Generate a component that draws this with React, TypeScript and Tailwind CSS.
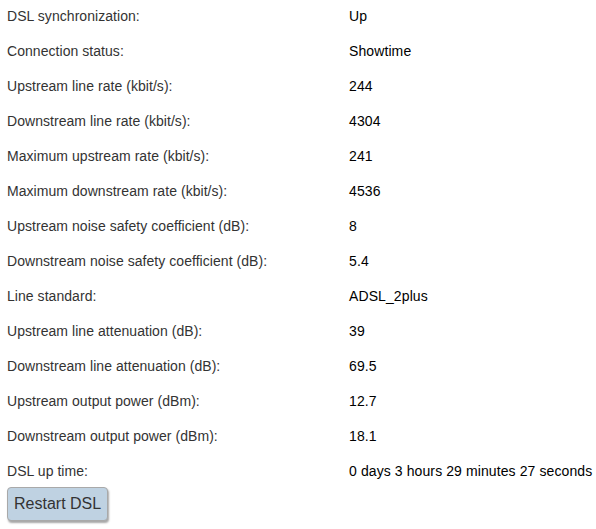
const rows: [string, string][] = [
  ["DSL synchronization:", "Up"],
  ["Connection status:", "Showtime"],
  ["Upstream line rate (kbit/s):", "244"],
  ["Downstream line rate (kbit/s):", "4304"],
  ["Maximum upstream rate (kbit/s):", "241"],
  ["Maximum downstream rate (kbit/s):", "4536"],
  ["Upstream noise safety coefficient (dB):", "8"],
  ["Downstream noise safety coefficient (dB):", "5.4"],
  ["Line standard:", "ADSL_2plus"],
  ["Upstream line attenuation (dB):", "39"],
  ["Downstream line attenuation (dB):", "69.5"],
  ["Upstream output power (dBm):", "12.7"],
  ["Downstream output power (dBm):", "18.1"],
  ["DSL up time:", "0 days 3 hours 29 minutes 27 seconds"],
];

export default function App() {
  return (
    <div className="w-[596px] h-[529px] bg-white font-['Liberation_Sans',Arial,sans-serif] text-[14px] overflow-hidden">
      <div className="pl-[7px] -mt-[2px]">
        {rows.map(([label, value]) => (
          <div key={label} className="grid grid-cols-[342px_1fr] h-[35px] items-center leading-none">
            <span className="text-[#333333] tracking-[0.05px]">{label}</span>
            <span className="text-black whitespace-nowrap tracking-[0.1px]">{value}</span>
          </div>
        ))}
        <button className="mt-[-1px] h-[34px] px-[6px] text-[16px] text-[#333333] bg-[#bfd2e2] border border-[#a9a9a9] rounded-[4px] shadow-[1px_2px_2px_rgba(0,0,0,0.35)]">
          Restart DSL
        </button>
      </div>
    </div>
  );
}
